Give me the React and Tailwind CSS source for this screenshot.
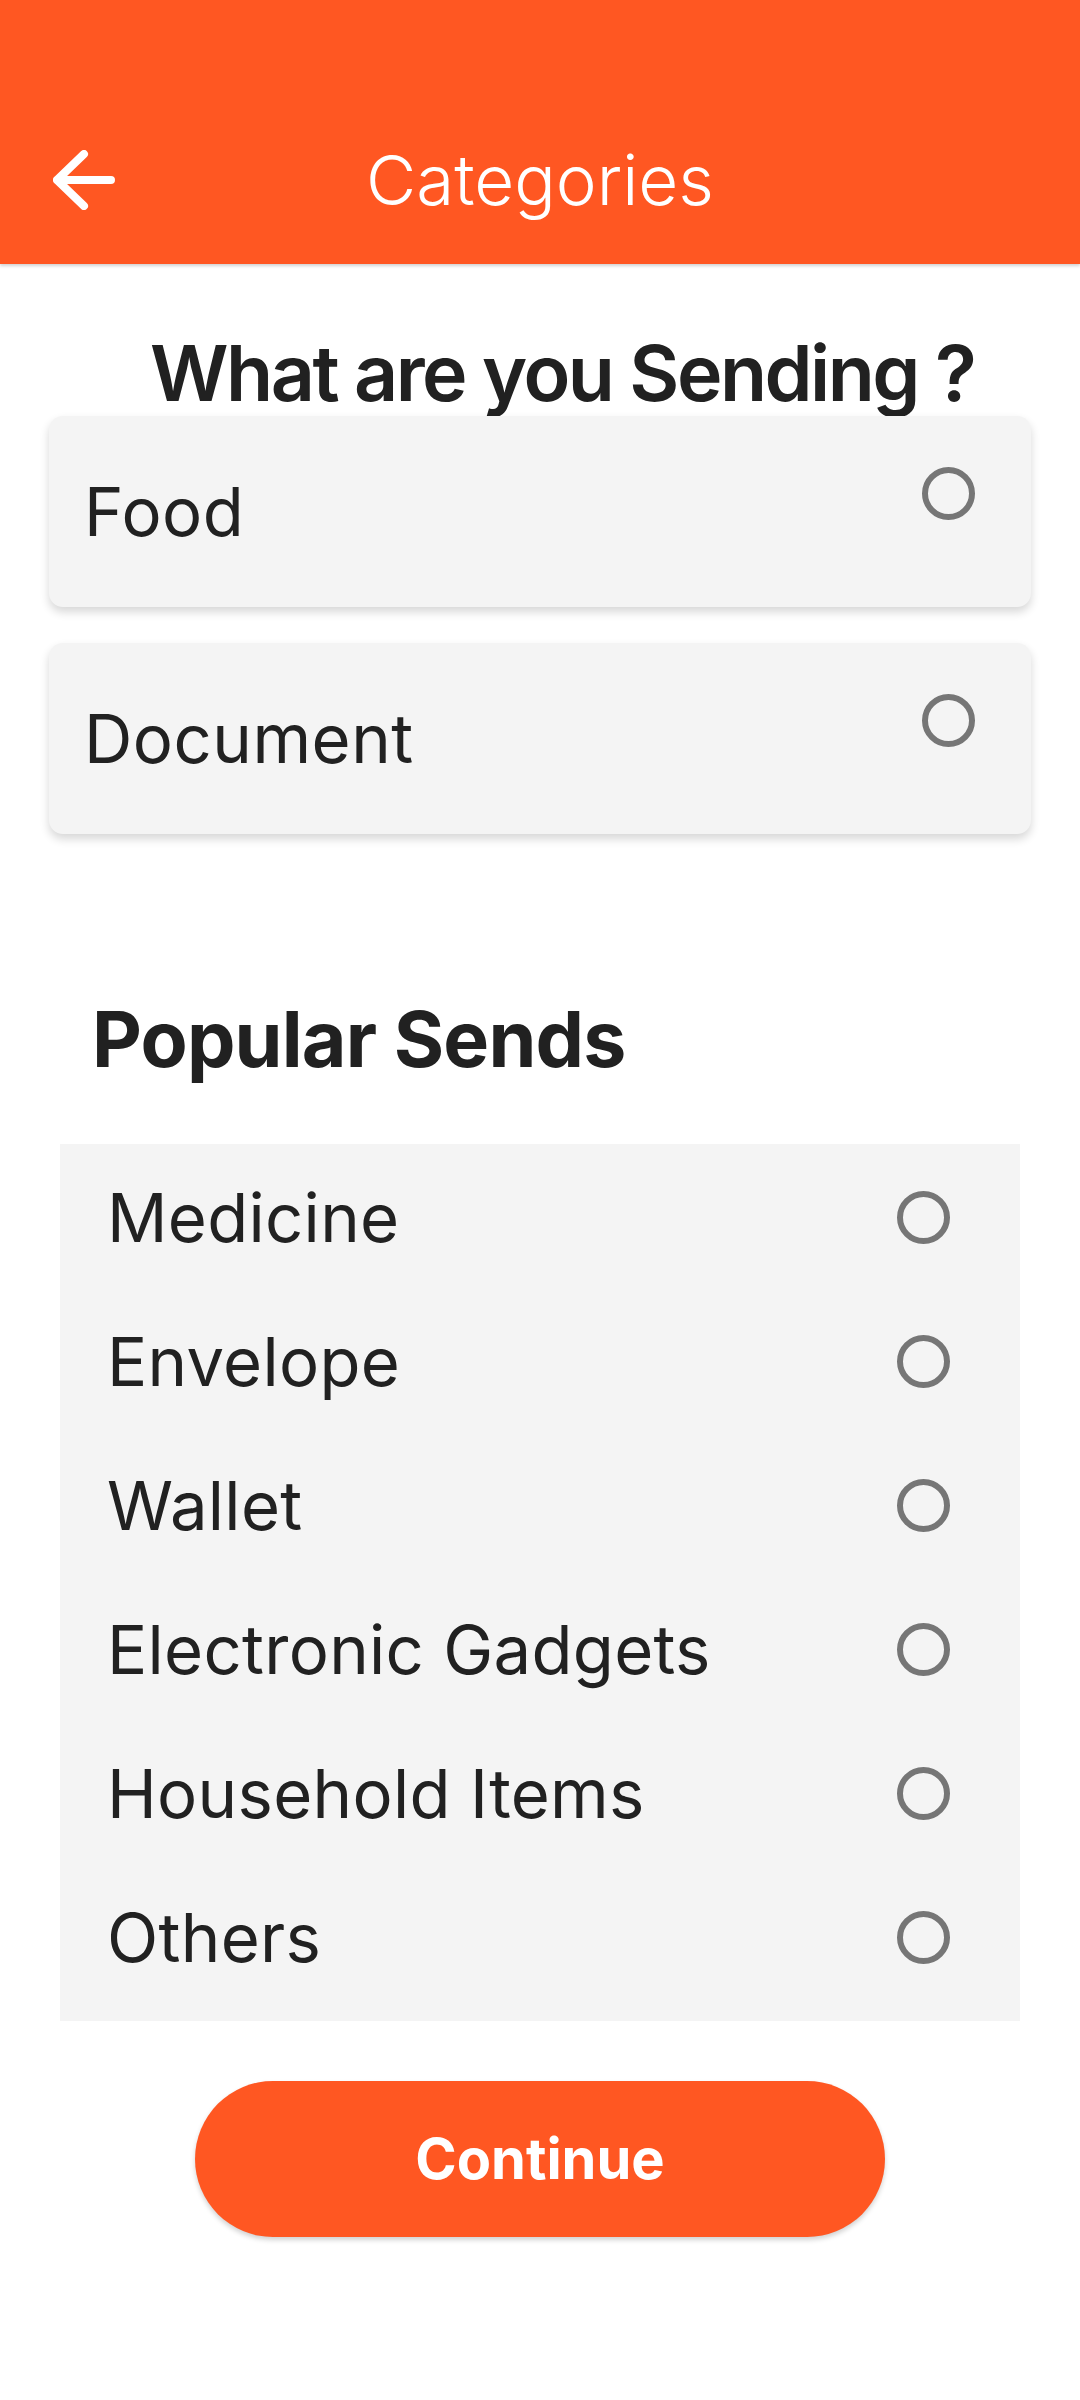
import React from 'react';

const font = { fontFamily: 'Inter, "Open Sans", sans-serif' };

const Radio = ({ className = '' }) => (
  <span className={`block w-[53px] h-[53px] rounded-full border-[6px] border-[#767676] shrink-0 ${className}`} />
);

const BackArrow = () => (
  <svg width="62" height="60" viewBox="0 0 62 60" fill="none">
    <path
      d="M31 4 L4 30 L31 56 M4 30 H58"
      stroke="white"
      strokeWidth="8"
      strokeLinecap="round"
      strokeLinejoin="round"
    />
  </svg>
);

const TopCard = ({ label }) => (
  <div className="flex justify-between items-center h-[191px] rounded-[14px] bg-[#f4f4f4] shadow-[0_5px_10px_rgba(0,0,0,0.16)] pl-[35px] pr-[56px]">
    <span className="text-[67px] leading-none text-[#212121] tracking-[0.5px]">{label}</span>
    <Radio className="self-start mt-[51px]" />
  </div>
);

export default function App() {
  const popular = ['Medicine', 'Envelope', 'Wallet', 'Electronic Gadgets', 'Household Items', 'Others'];

  return (
    <div className="w-[1080px] min-h-[2400px] bg-white" style={font}>
      {/* header */}
      <div className="h-[264px] bg-[#ff5722] flex flex-col justify-end pb-[24px] shadow-[0_2px_3px_rgba(0,0,0,0.18)] relative z-10">
        <div className="relative h-[120px] flex items-center justify-center">
          <div className="absolute left-[53px] top-[30px]">
            <BackArrow />
          </div>
          <span className="text-[69px] leading-none font-light text-white">Categories</span>
        </div>
      </div>

      <div className="pl-[150px] mt-[71px]">
        <h1 className="text-[77px] leading-none font-semibold text-[#212121] tracking-[-2.5px]">What are you Sending ?</h1>
      </div>

      <div className="flex flex-col gap-[36px] mx-[49px] mt-[4px]">
        <TopCard label="Food" />
        <TopCard label="Document" />
      </div>

      <h2 className="pl-[92px] mt-[167px] text-[77px] leading-none font-bold text-[#212121] tracking-[-0.8px]">
        Popular Sends
      </h2>

      <div className="mx-[60px] mt-[66px] bg-[#f4f4f4] pt-[1px] pb-[12px]">
        {popular.map((item) => (
          <div key={item} className="h-[144px] flex items-center justify-between pl-[47px] pr-[70px]">
            <span className="text-[67px] leading-none text-[#212121] tracking-[0.3px]">{item}</span>
            <Radio />
          </div>
        ))}
      </div>

      <div className="flex justify-center mt-[60px]">
        <button className="w-[690px] h-[156px] rounded-full bg-[#ff5722] text-white text-[56px] font-bold shadow-[0_3px_5px_rgba(0,0,0,0.18)]">
          Continue
        </button>
      </div>
    </div>
  );
}
